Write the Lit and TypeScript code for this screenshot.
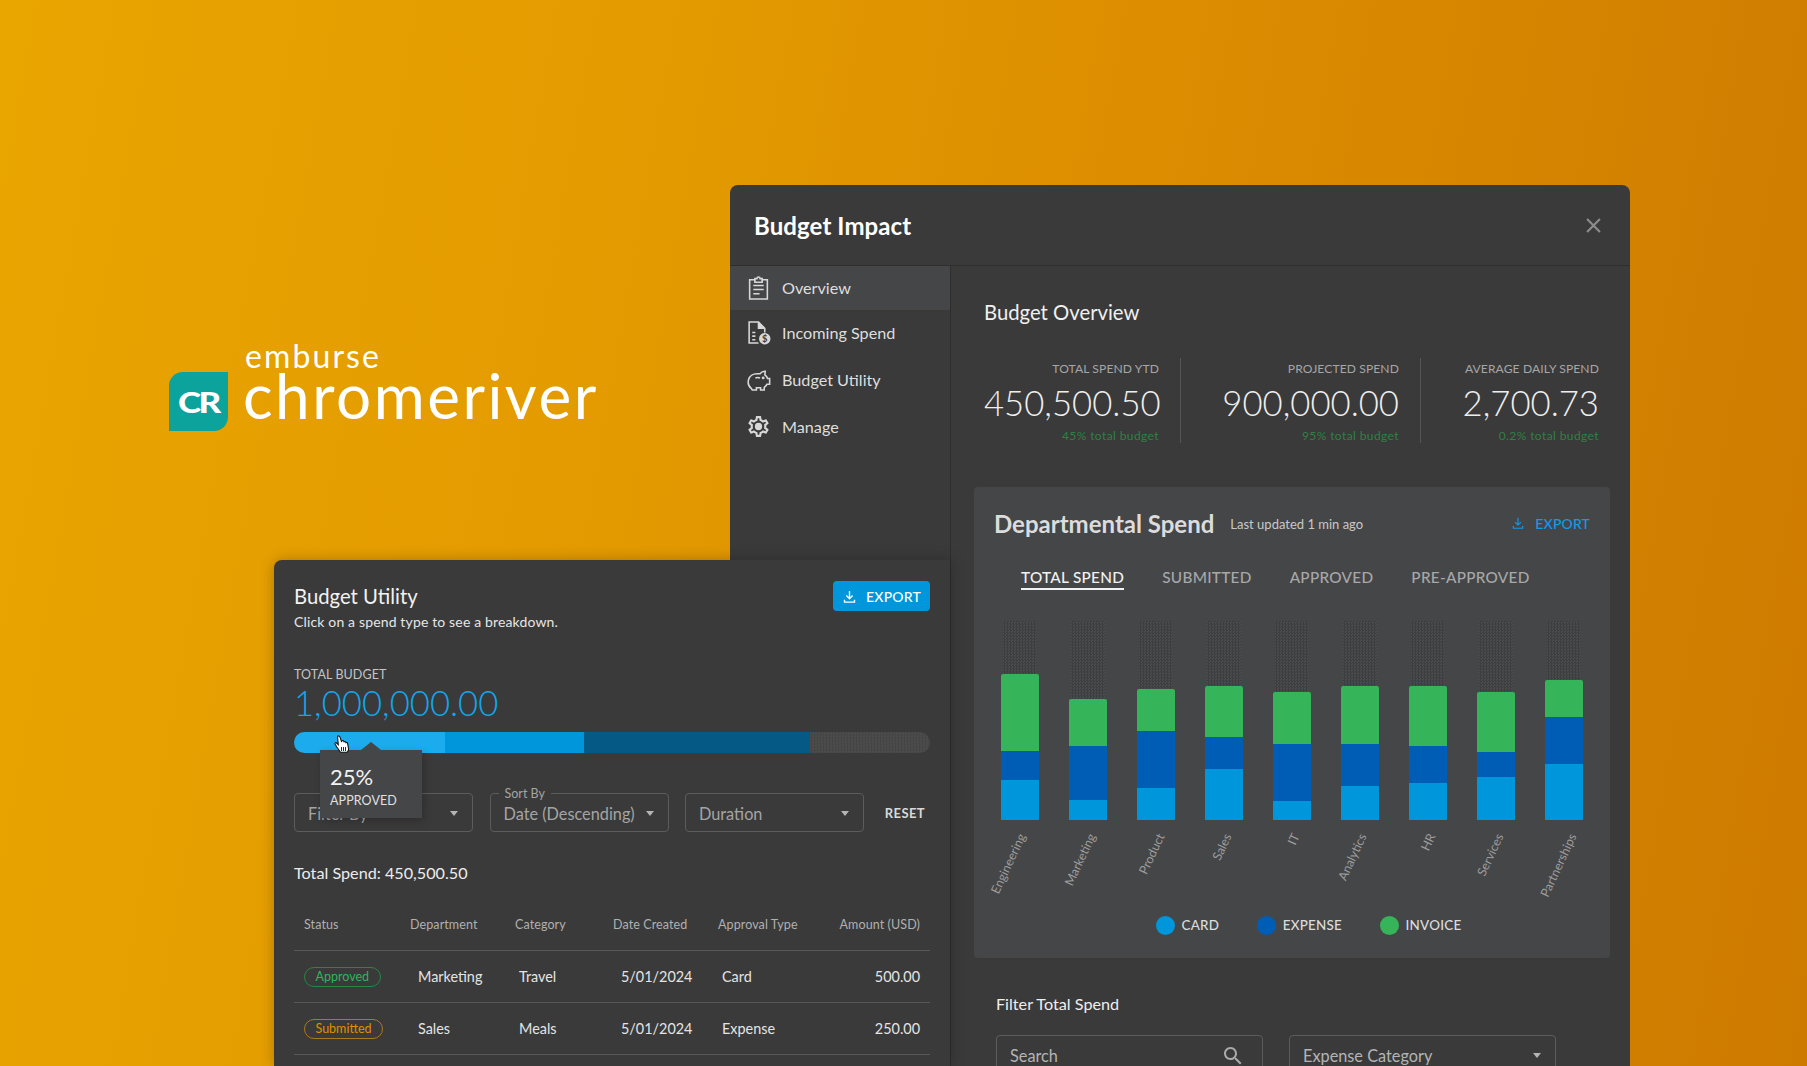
import { LitElement, html, css, svg } from "lit";
import { customElement } from "lit/decorators.js";

const dl = () => html`<svg viewBox="0 0 24 24" fill="none" stroke="currentColor" stroke-width="2.2"><path d="M12 3v12M7 10.5l5 5 5-5M4 17v4h16v-4"/></svg>`;
const caret = html`<svg class="caret" viewBox="0 0 10 6"><path d="M0 0h10L5 6z" fill="#b4b4b4"/></svg>`;

const navIcons = {
  clip: svg`<path d="M3.500 4.500h5v-1h2c0-2 3-2 3 0h2v1h5v18.500h-17z"/><path d="M7 10h10M7 14h10M7 18h6"/><path d="M8.500 4.500v2.500h7v-2.500"/>`,
  doc: svg`<path d="M12 22H3V2h9l6 6v4"/><path d="M12 2v6h6" fill="#d8d8d8"/><path d="M6 12h3M6 15.500h3M6 19h3"/><circle cx="18" cy="18" r="5.500" fill="#d8d8d8" stroke="none"/><text x="18" y="21.200" text-anchor="middle" font-size="9" font-weight="700" fill="#3a3a3a" stroke="none" font-family="Lato">$</text>`,
  pig: svg`<path d="M5 20.500c-2.500-2-3.500-5-2.500-8.500.8-3 4-5.500 8-5.500h3c1.200-1.600 3-2.500 5-2.500l-.4 3.500c1.300.9 2.200 2 2.600 3.500h2v5.500h-2.500c-.6 1.300-1.400 2.200-2.700 3v2.500h-3.500v-2h-4v2H6z"/><path d="M9 10.500c1.500-.6 3-.6 4.500 0"/><circle cx="16.500" cy="10.500" r=".6" fill="#d8d8d8"/>`,
};

const gearPath = "M19.43 12.98c.04-.32.07-.64.07-.98 0-.34-.03-.66-.07-.98l2.11-1.65c.19-.15.24-.42.12-.64l-2-3.46c-.09-.16-.26-.25-.44-.25-.06 0-.12.01-.17.03l-2.49 1c-.52-.4-1.08-.73-1.69-.98l-.38-2.65C14.46 2.18 14.25 2 14 2h-4c-.25 0-.46.18-.49.42l-.38 2.65c-.61.25-1.17.59-1.69.98l-2.49-1c-.06-.02-.12-.03-.18-.03-.17 0-.34.09-.43.25l-2 3.46c-.13.22-.07.49.12.64l2.11 1.65c-.04.32-.07.65-.07.98 0 .33.03.66.07.98l-2.11 1.65c-.19.15-.24.42-.12.64l2 3.46c.09.16.26.25.44.25.06 0 .12-.01.17-.03l2.49-1c.52.4 1.08.73 1.69.98l.38 2.65c.03.24.24.42.49.42h4c.25 0 .46-.18.49-.42l.38-2.65c.61-.25 1.17-.59 1.69-.98l2.49 1c.06.02.12.03.18.03.17 0 .34-.09.43-.25l2-3.46c.12-.22.07-.49-.12-.64l-2.11-1.65zm-1.98-1.71c.04.31.05.52.05.73 0 .21-.02.43-.05.73l-.14 1.13.89.7 1.08.84-.7 1.21-1.27-.51-1.04-.42-.9.68c-.43.32-.84.56-1.25.73l-1.06.43-.16 1.13-.2 1.35h-1.4l-.19-1.35-.16-1.13-1.06-.43c-.43-.18-.83-.41-1.23-.71l-.91-.7-1.06.43-1.27.51-.7-1.21 1.08-.84.89-.7-.14-1.13c-.03-.31-.05-.54-.05-.74s.02-.43.05-.73l.14-1.13-.89-.7-1.08-.84.7-1.21 1.27.51 1.04.42.9-.68c.43-.32.84-.56 1.25-.73l1.06-.43.16-1.13.2-1.35h1.39l.19 1.35.16 1.13 1.06.43c.43.18.83.41 1.23.71l.91.7 1.06-.43 1.27-.51.7 1.21-1.07.85-.89.7.14 1.13z";

const nav = [
  { label: "Overview", icon: navIcons.clip, cls: "n0 active" },
  { label: "Incoming Spend", icon: navIcons.doc, cls: "n1" },
  { label: "Budget Utility", icon: navIcons.pig, cls: "n2" },
  {
    label: "Manage",
    icon: svg`<path d=${gearPath} fill="#d8d8d8" stroke="none"/><circle cx="12" cy="12" r="3.500" fill="#d8d8d8" stroke="none"/>`,
    cls: "n3",
  },
];

const stats = [
  { label: "TOTAL SPEND YTD", value: "450,500.50", sub: "45% total budget", w: 197 },
  { label: "PROJECTED SPEND", value: "900,000.00", sub: "95% total budget", w: 240 },
  { label: "AVERAGE DAILY SPEND", value: "2,700.73", sub: "0.2% total budget", w: 178 },
];

/* name, heights in px (invoice, expense, card), label offset */
const bars = [
  ["Engineering", 77, 29, 40, -10],
  ["Marketing", 47, 54, 20, -6],
  ["Product", 42, 57, 32, -5],
  ["Sales", 51, 32, 51, -6],
  ["IT", 52, 57, 19, -6],
  ["Analytics", 58, 42, 34, -9],
  ["HR", 60, 37, 37, -6],
  ["Services", 60, 25, 43, -6],
  ["Partnerships", 37, 47, 56, 3],
] as const;

const rows = [
  { status: "Approved", cls: "ok", dept: "Marketing", cat: "Travel", date: "5/01/2024", type: "Card", amt: "500.00" },
  { status: "Submitted", cls: "sub", dept: "Sales", cat: "Meals", date: "5/01/2024", type: "Expense", amt: "250.00" },
];

@customElement("app-root")
export class AppRoot extends LitElement {
  static styles = css`
    :host {
      display: block;
      position: relative;
      width: 1807px;
      height: 1066px;
      overflow: hidden;
      font-family: "Lato", "Liberation Sans", sans-serif;
      color: #e4e4e4;
      background: linear-gradient(100deg, #e9a500 0%, #e39a00 35%, #da8a00 65%, #cd7a00 100%);
    }
    * { box-sizing: border-box; }

    /* logo */
    .logo { position: absolute; left: 169px; top: 342px; display: flex; align-items: flex-start; gap: 16px; color: #fff; }
    .mark {
      width: 59px; height: 59px; margin-top: 30px;
      background: #0ba39c; border-radius: 14px 0 14px 0;
      display: flex; align-items: center; justify-content: center;
      font-weight: 900; font-size: 28px; letter-spacing: -2px; line-height: 1;
    }
    .mark span { display: block; transform: scaleX(1.25); }
    .words { display: flex; flex-direction: column; }
    .emb { font-size: 32px; line-height: 28px; letter-spacing: 2.1px; font-weight: 400; margin-left: 1px; }
    .chr { font-size: 62px; line-height: 64px; font-weight: 400; letter-spacing: 2.5px; margin: -7px 0 0 -1px; }

    /* main window */
    .win {
      position: absolute; left: 730px; top: 185px; width: 900px; height: 881px;
      background: #3a3a3a; border-radius: 8px 8px 0 0; overflow: hidden;
      display: flex; flex-direction: column;
    }
    .head {
      height: 81px; flex: none; border-bottom: 1px solid #2e2e2e;
      display: flex; align-items: center; justify-content: space-between;
      padding: 0 29px 0 24px;
    }
    .head h1 { margin: 0; font-size: 24px; font-weight: 700; color: #fff; letter-spacing: .1px; }
    .x { width: 15px; height: 15px; stroke: #8c8c8c; stroke-width: 2; }
    .body { display: flex; flex: 1; min-height: 0; }
    .side { width: 221px; flex: none; border-right: 1px solid #2e2e2e; }
    .nav { display: flex; align-items: center; gap: 11.500px; padding: 0 0 1.500px 15.500px; font-size: 16.200px; color: #dedede; }
    .nav svg { width: 25px; height: 25px; flex: none; fill: none; stroke: #d8d8d8; stroke-width: 1.500; }
    .n0 { height: 44px; background: #454648; }
    .n1 { height: 46px; }
    .n2 { height: 47px; margin-top: 1px; }
    .n3 { height: 47px; }
    .main { flex: 1; min-width: 0; padding: 34px 20px 0 23px; }
    .main h2 { margin: 0 0 0 10px; font-size: 20.300px; line-height: 24px; font-weight: 400; color: #f0f0f0; }
    .stats { display: flex; margin: 34px 0 0 10px; }
    .stat { text-align: right; padding: 3px 21px 0 0; border-right: 1px solid #555; height: 85px; flex: none; }
    .stat:last-child { border-right: 0; padding-right: 0; }
    .stat .l { font-size: 12.100px; line-height: 16px; color: #a6a6a6; letter-spacing: .1px; }
    .stat .v { font-size: 34.700px; line-height: 42px; margin-top: 5px; font-weight: 300; color: #eeeeee; }
    .stat .s { font-size: 12px; line-height: 16px; margin-top: 4px; color: #2f8043; letter-spacing: .4px; }

    /* card */
    .card { margin-top: 44px; height: 471px; background: #454648; border-radius: 4px; padding-top: 18px; }
    .card-h { display: flex; align-items: center; height: 36px; padding: 0 20px 0 20px; }
    .card-h b { font-size: 24px; font-weight: 700; color: #dcdcdc; }
    .card-h small { font-size: 13px; margin-left: 16px; margin-top: 2px; color: #c8c8c8; }
    .link { margin-left: auto; display: flex; align-items: center; gap: 10px; color: #0e9bec; font-size: 14px; font-weight: 500; letter-spacing: .15px; }
    .link svg { width: 14px; height: 14px; stroke-width: 2; }
    .tabs { display: flex; gap: 38px; margin-top: 26px; padding-left: 47px; }
    .tab { font-size: 15.300px; line-height: 20px; font-weight: 500; color: #a8a8a8; letter-spacing: .3px; border-bottom: 2px solid transparent; height: 23px; }
    .tab.on { color: #f2f2f2; border-bottom-color: #f2f2f2; }
    .chart { display: flex; gap: 30px; margin-top: 31px; padding-left: 27px; }
    .col { width: 38px; height: 199px; display: flex; flex-direction: column; align-items: center; }
    .ghost { flex: 1; width: 34px; background: repeating-conic-gradient(#3d3e3f 0 25%, #4a4b4d 0 50%) 0 0 / 3px 3px; }
    .seg { width: 38px; flex: none; }
    .seg.g { background: #35b459; border-radius: 2px 2px 0 0; }
    .seg.b { background: #005db6; }
    .seg.c { background: #0096dc; }
    .labs { display: flex; gap: 30px; padding-left: 27px; height: 80px; }
    .lab { width: 38px; display: flex; justify-content: center; }
    .lab div { width: 0; height: 0; margin-top: 11px; display: flex; justify-content: flex-end; transform: rotate(-65deg); transform-origin: 0 0; }
    .lab span { white-space: nowrap; font-size: 12.500px; line-height: 16px; color: #9c9c9c; }
    .legend { display: flex; gap: 38px; padding: 16px 0 0 182px; }
    .leg { display: flex; align-items: center; gap: 6.500px; font-size: 13.400px; font-weight: 500; color: #dcdcdc; letter-spacing: .25px; line-height: 19px; }
    .dot { width: 19px; height: 19px; border-radius: 50%; }
    .ft { margin: 36px 0 0 22px; font-size: 16.200px; line-height: 20px; color: #eee; font-weight: 400; }
    .filters { display: flex; gap: 26px; margin: 21px 0 0 22px; }
    .box {
      width: 267px; height: 44px; border: 1px solid #5c5c5c; border-radius: 4px;
      display: flex; align-items: center; justify-content: space-between;
      padding: 0 14px 3px 13px; font-size: 16.300px; color: #b4b4b4;
    }
    .box svg.s { width: 24px; height: 24px; fill: #aaa; margin-right: 3px; }

    /* budget utility window */
    .util {
      position: absolute; left: 274px; top: 560px; width: 676px; height: 506px;
      background: #3a3a3a; border-radius: 8px 0 0 0; padding: 21px 20px 0; overflow: hidden;
      box-shadow: 0 0 14px rgba(0, 0, 0, .25);
    }
    .u-h { display: flex; justify-content: space-between; align-items: flex-start; }
    .u-t { margin-top: 3px; font-size: 20.300px; line-height: 24px; color: #f2f2f2; font-weight: 400; }
    .u-s { margin-top: 5px; font-size: 14px; line-height: 18px; color: #e6e6e6; letter-spacing: .15px; }
    .btn {
      width: 97px; height: 30px; background: #0096dc; border-radius: 4px; color: #fff;
      display: flex; align-items: center; justify-content: center; gap: 9px;
      font-size: 14px; font-weight: 500; letter-spacing: .2px;
    }
    .btn svg { width: 15px; height: 15px; }
    .tb { margin-top: 36px; font-size: 12.500px; line-height: 16px; color: #c4c4c4; letter-spacing: .1px; }
    .big { font-size: 34.700px; line-height: 40px; font-weight: 300; color: #12a6ec; }
    .track {
      margin-top: 9px; height: 21px; border-radius: 11px; overflow: hidden; display: flex;
      background: repeating-conic-gradient(#454545 0 25%, #4d4d4d 0 50%) 0 0 / 3px 3px;
    }
    .t1 { width: 151px; background: #1cabec; }
    .t2 { width: 139px; background: #0096dc; }
    .t3 { width: 226px; background: #055a85; }
    .sel-row { display: flex; align-items: center; gap: 16.500px; margin-top: 40px; }
    .sel {
      position: relative; width: 179px; height: 39px; border: 1px solid #5c5c5c; border-radius: 4px;
      display: flex; align-items: center; justify-content: space-between;
      padding: 2px 14px 0 13px; font-size: 16.300px; color: #a4a4a4;
    }
    .caret { width: 8px; height: 5px; flex: none; }
    .sel .cap { position: absolute; left: 8px; top: -7px; padding: 0 6px; background: #3a3a3a; font-size: 12.500px; line-height: 14px; color: #a4a4a4; }
    .reset { margin-left: auto; padding-right: 5px; font-size: 13px; font-weight: 700; color: #d8d8d8; letter-spacing: .4px; }
    .total { margin-top: 31px; font-size: 16.200px; line-height: 20px; color: #ececec; }
    .table { margin-top: 16px; }
    .row {
      display: grid; grid-template-columns: 106px 105px 98px 105px 1fr 120px;
      align-items: center; height: 52px; border-bottom: 1px solid #585858;
      padding: 0 10px; font-size: 14.400px; color: #e4e4e4; white-space: nowrap;
    }
    .row > div:nth-child(2), .row > div:nth-child(4) { padding-left: 8px; }
    .row > div:nth-child(3), .row > div:nth-child(5) { padding-left: 4px; }
    .row.hd { font-size: 12.500px; color: #b0b0b0; letter-spacing: .1px; }
    .row.hd > div { padding-left: 0 !important; }
    .am { text-align: right; }
    .pill { display: inline-flex; align-items: center; height: 20px; padding: 0 10.500px; border: 1px solid; border-radius: 10px; font-size: 12.500px; }
    .pill.ok { color: #33b45a; border-color: #2a8546; }
    .pill.sub { color: #e08e00; border-color: #a87a1e; }

    /* overlay on the bar */
    .tip {
      position: absolute; left: 46px; top: 190px; width: 102px; height: 68px;
      background: #454648; padding: 16px 0 0 10px; box-shadow: 2px 3px 8px rgba(0, 0, 0, .2);
    }
    .tip::before {
      content: ""; position: absolute; left: 41px; top: -8px; width: 0; height: 0;
      border-left: 10px solid transparent; border-right: 10px solid transparent; border-bottom: 8px solid #454648;
    }
    .tip .p { font-size: 22px; line-height: 22px; color: #f2f2f2; }
    .tip .a { margin-top: 5px; font-size: 12.500px; line-height: 16px; color: #e0e0e0; letter-spacing: .1px; }
    .hand { position: absolute; left: 60px; top: 175px; width: 16px; height: 19px; }
  `;

  render() {
    return html`
      <div class="logo">
        <div class="mark"><span>CR</span></div>
        <div class="words">
          <div class="emb">emburse</div>
          <div class="chr">chromeriver</div>
        </div>
      </div>

      <section class="win">
        <header class="head">
          <h1>Budget Impact</h1>
          <svg class="x" viewBox="0 0 14 14"><path d="M1 1l12 12M13 1L1 13"/></svg>
        </header>
        <div class="body">
          <nav class="side">
            ${nav.map(
              (n) => html`<div class="nav ${n.cls}"><svg viewBox="0 0 24 24">${n.icon}</svg><span>${n.label}</span></div>`
            )}
          </nav>
          <div class="main">
            <h2>Budget Overview</h2>
            <div class="stats">
              ${stats.map(
                (s) => html`<div class="stat" style="width:${s.w}px">
                  <div class="l">${s.label}</div>
                  <div class="v">${s.value}</div>
                  <div class="s">${s.sub}</div>
                </div>`
              )}
            </div>
            <div class="card">
              <div class="card-h">
                <b>Departmental Spend</b><small>Last updated 1 min ago</small>
                <div class="link">${dl()}<span>EXPORT</span></div>
              </div>
              <div class="tabs">
                <div class="tab on">TOTAL SPEND</div>
                <div class="tab">SUBMITTED</div>
                <div class="tab">APPROVED</div>
                <div class="tab">PRE-APPROVED</div>
              </div>
              <div class="chart">
                ${bars.map(
                  (b) => html`<div class="col">
                    <div class="ghost"></div>
                    <div class="seg g" style="height:${b[1]}px"></div>
                    <div class="seg b" style="height:${b[2]}px"></div>
                    <div class="seg c" style="height:${b[3]}px"></div>
                  </div>`
                )}
              </div>
              <div class="labs">
                ${bars.map((b) => html`<div class="lab"><div style="margin-left:${b[4]}px"><span>${b[0]}</span></div></div>`)}
              </div>
              <div class="legend">
                <div class="leg"><i class="dot" style="background:#0096dc"></i>CARD</div>
                <div class="leg"><i class="dot" style="background:#005db6"></i>EXPENSE</div>
                <div class="leg"><i class="dot" style="background:#35b459"></i>INVOICE</div>
              </div>
            </div>
            <div class="ft">Filter Total Spend</div>
            <div class="filters">
              <div class="box">
                <span>Search</span>
                <svg class="s" viewBox="0 0 24 24"><path d="M15.5 14h-.79l-.28-.27C15.41 12.59 16 11.11 16 9.5 16 5.91 13.09 3 9.5 3S3 5.91 3 9.500 5.910 16 9.500 16c1.610 0 3.090-.59 4.230-1.570l.27.28v.79l5 4.990L20.490 19l-4.990-5zm-6 0C7.010 14 5 11.990 5 9.500S7.010 5 9.500 5 14 7.010 14 9.500 11.990 14 9.500 14z"/></svg>
              </div>
              <div class="box"><span>Expense Category</span>${caret}</div>
            </div>
          </div>
        </div>
      </section>

      <section class="util">
        <div class="u-h">
          <div>
            <div class="u-t">Budget Utility</div>
            <div class="u-s">Click on a spend type to see a breakdown.</div>
          </div>
          <div class="btn">${dl()}<span>EXPORT</span></div>
        </div>
        <div class="tb">TOTAL BUDGET</div>
        <div class="big">1,000,000.00</div>
        <div class="track"><div class="t1"></div><div class="t2"></div><div class="t3"></div></div>
        <div class="sel-row">
          <div class="sel"><span>Filter By</span>${caret}</div>
          <div class="sel"><span class="cap">Sort By</span><span>Date (Descending)</span>${caret}</div>
          <div class="sel"><span>Duration</span>${caret}</div>
          <div class="reset">RESET</div>
        </div>
        <div class="total">Total Spend: 450,500.50</div>
        <div class="table">
          <div class="row hd">
            <div>Status</div><div>Department</div><div>Category</div><div>Date Created</div><div>Approval Type</div><div class="am">Amount (USD)</div>
          </div>
          ${rows.map(
            (r) => html`<div class="row">
              <div><span class="pill ${r.cls}">${r.status}</span></div>
              <div>${r.dept}</div><div>${r.cat}</div><div>${r.date}</div><div>${r.type}</div><div class="am">${r.amt}</div>
            </div>`
          )}
        </div>
        <div class="tip"><div class="p">25%</div><div class="a">APPROVED</div></div>
        <svg class="hand" viewBox="0 0 16 19">
          <path d="M3.500 1.500c.8-1 2-.6 2.400.4l1.600 4.600 .6-.7c.6-.5 1.300-.3 1.600.3l.4.700c.6-.5 1.300-.3 1.600.3l.3.600c.7-.4 1.400-.1 1.600.7l1 5.600c0 1.500-.8 2.600-1.500 3.300H6.500L2.600 11.800 1 8.800c-.3-.8.500-1.500 1.300-1l2 1.800z" fill="#fff" stroke="#111" stroke-width="1.100"/>
          <path d="M7.500 12v4M9.500 12v4M11.500 12v4" stroke="#111" stroke-width=".9"/>
        </svg>
      </section>
    `;
  }
}
